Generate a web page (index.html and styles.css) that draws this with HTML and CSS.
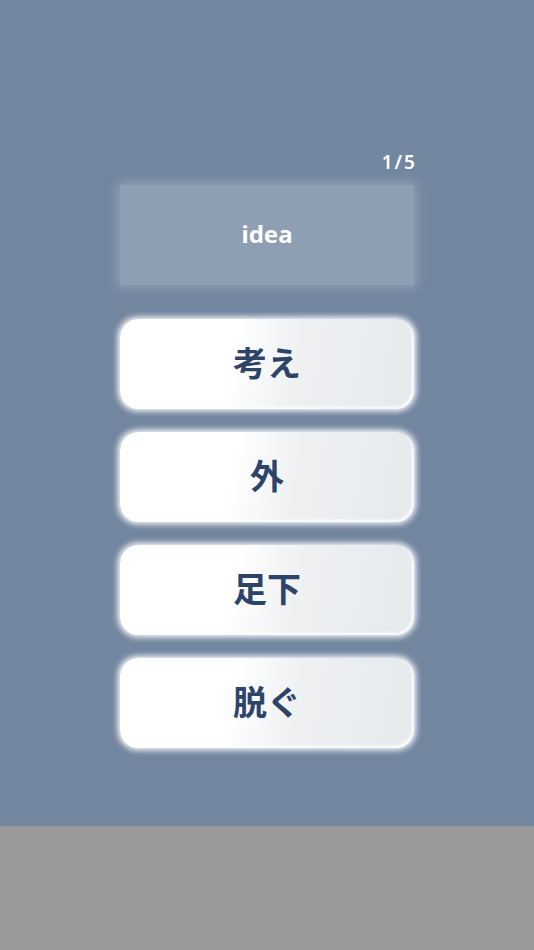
FILE: index.html
```html
<html>

<head>
  <meta charset="utf-8">
  <link rel="stylesheet" href="styles.css">
</head>

<body>
  <div class="screen">
    <div class="quiz">
      <div class="counter">1/5</div>
      <div class="word-card">idea</div>
      <div class="choices">
        <button class="choice">考え</button>
        <button class="choice">外</button>
        <button class="choice">足下</button>
        <button class="choice">脱ぐ</button>
      </div>
    </div>
  </div>
  <div class="footer"></div>
</body>

</html>
```

FILE: styles.css
```css
body {
  margin: 0;
  font-family: "Noto Sans", "Noto Sans CJK JP", sans-serif;
}

.screen {
  height: 826px;
  background-color: #72869f;
  display: flex;
  justify-content: center;
}

.quiz {
  width: 300px;
  padding-top: 149px;
  display: flex;
  flex-direction: column;
  align-items: center;
}

.counter {
  align-self: flex-end;
  margin-right: 0;
  color: #ffffff;
  font-size: 19px;
  font-weight: 600;
  letter-spacing: 2px;
  line-height: 26px;
}

.word-card {
  margin-top: 10px;
  width: 294px;
  height: 96px;
  padding-bottom: 4px;
  background-color: #8e9eb3;
  box-shadow: 0 0 10px 3px #8e9eb3;
  color: #ffffff;
  font-size: 24px;
  font-weight: bold;
  display: flex;
  align-items: center;
  justify-content: center;
}

.choices {
  margin-top: 34px;
  display: flex;
  flex-direction: column;
  gap: 23px;
}

.choice {
  width: 294px;
  height: 90px;
  padding: 0 0 5px 0;
  border: none;
  border-radius: 18px;
  background: linear-gradient(100deg, #ffffff 0%, #ffffff 38%, #eef0f2 60%, #e6e9ec 100%);
  box-shadow: 0 0 6px 2px #ffffff, inset -2px -2px 3px rgba(255, 255, 255, 0.9);
  color: #2d4468;
  font-family: "Noto Sans CJK JP", sans-serif;
  font-size: 34px;
  font-weight: bold;
  line-height: 40px;
  outline: none;
  cursor: pointer;
}

.footer {
  height: 124px;
  background-color: #999999;
}
```
